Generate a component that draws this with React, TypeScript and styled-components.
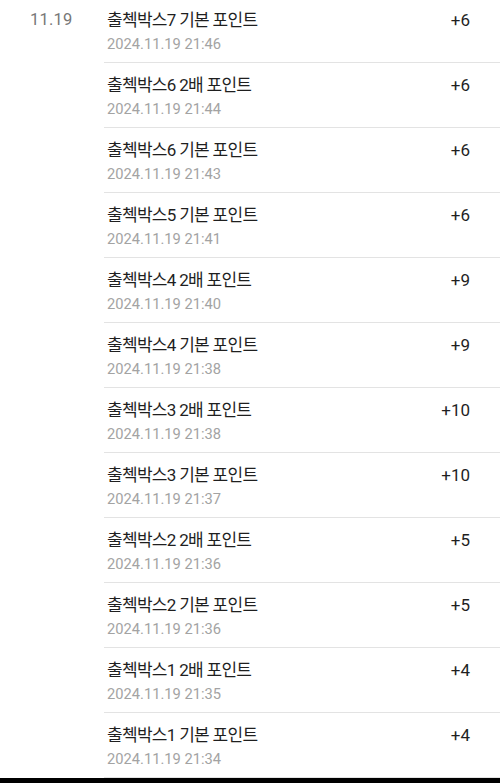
import React from "react";
import styled, { createGlobalStyle } from "styled-components";

const GlobalStyle = createGlobalStyle`
  html, body {
    margin: 0;
    padding: 0;
    background: #ffffff;
  }
  body {
    font-family: Roboto, "Noto Sans CJK KR", sans-serif;
    overflow: hidden;
  }
`;

const Page = styled.div`
  width: 500px;
  height: 783px;
  display: flex;
  flex-direction: column;
  overflow: hidden;
`;

const DayGroup = styled.section`
  display: grid;
  grid-template-columns: 104px 1fr;
  margin-top: -2px;
`;

const DateLabel = styled.div`
  padding: 11px 0 0 30px;
  font-size: 16.5px;
  line-height: 22px;
  color: #777777;
  letter-spacing: 0.2px;
`;

const List = styled.ul`
  list-style: none;
  margin: 0;
  padding: 0;
`;

const Row = styled.li`
  height: 64px;
  box-sizing: content-box;
  display: flex;
  align-items: flex-start;
  justify-content: space-between;
  padding: 0 30px 0 3px;
  border-bottom: 1px solid #e3e3e3;
`;

const Info = styled.div`
  display: flex;
  flex-direction: column;
  padding-top: 11px;
`;

const Title = styled.div`
  font-size: 17px;
  line-height: 22px;
  color: #1f1f1f;
  letter-spacing: -0.7px;
  white-space: nowrap;
`;

const Time = styled.div`
  margin-top: 2px;
  font-size: 14.7px;
  line-height: 22px;
  color: #a3a3a3;
  white-space: nowrap;
`;

const Points = styled.div`
  padding-top: 11px;
  font-size: 17px;
  line-height: 22px;
  color: #1f1f1f;
`;

const BottomBar = styled.div`
  flex: 1;
  background: #000000;
`;

type Entry = { title: string; time: string; points: number };

const entries: Entry[] = [
  { title: "출첵박스7 기본 포인트", time: "2024.11.19 21:46", points: 6 },
  { title: "출첵박스6 2배 포인트", time: "2024.11.19 21:44", points: 6 },
  { title: "출첵박스6 기본 포인트", time: "2024.11.19 21:43", points: 6 },
  { title: "출첵박스5 기본 포인트", time: "2024.11.19 21:41", points: 6 },
  { title: "출첵박스4 2배 포인트", time: "2024.11.19 21:40", points: 9 },
  { title: "출첵박스4 기본 포인트", time: "2024.11.19 21:38", points: 9 },
  { title: "출첵박스3 2배 포인트", time: "2024.11.19 21:38", points: 10 },
  { title: "출첵박스3 기본 포인트", time: "2024.11.19 21:37", points: 10 },
  { title: "출첵박스2 2배 포인트", time: "2024.11.19 21:36", points: 5 },
  { title: "출첵박스2 기본 포인트", time: "2024.11.19 21:36", points: 5 },
  { title: "출첵박스1 2배 포인트", time: "2024.11.19 21:35", points: 4 },
  { title: "출첵박스1 기본 포인트", time: "2024.11.19 21:34", points: 4 },
];

const App = () => {
  return (
    <>
      <GlobalStyle />
      <Page>
        <DayGroup>
          <DateLabel>11.19</DateLabel>
          <List>
            {entries.map((e, i) => (
              <Row key={i}>
                <Info>
                  <Title>{e.title}</Title>
                  <Time>{e.time}</Time>
                </Info>
                <Points>+{e.points}</Points>
              </Row>
            ))}
          </List>
        </DayGroup>
        <BottomBar />
      </Page>
    </>
  );
};

export default App;
